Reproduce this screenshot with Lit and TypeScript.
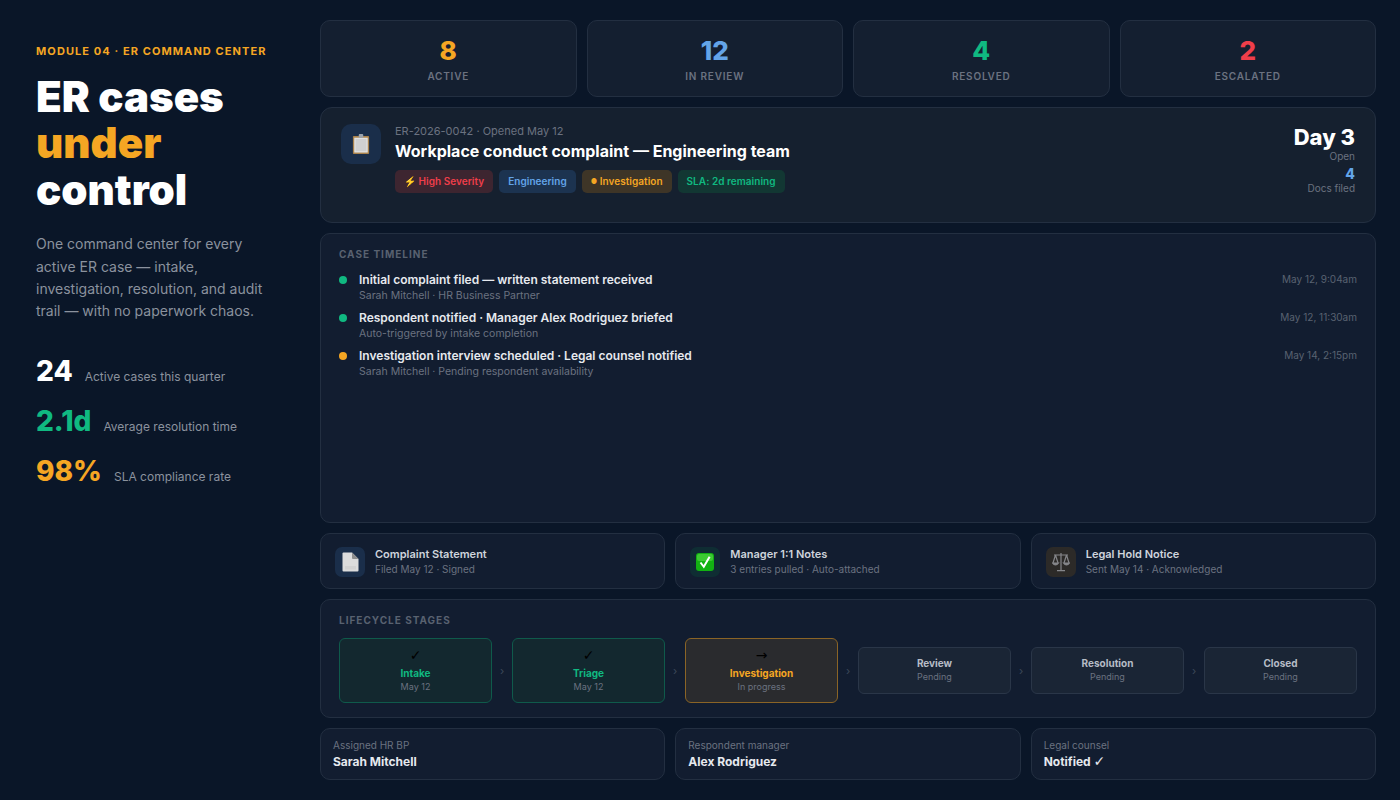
import { LitElement, html, css, svg } from 'lit';
import { customElement } from 'lit/decorators.js';

const stats = [
  { value: '8', label: 'ACTIVE', color: '#f5a623' },
  { value: '12', label: 'IN REVIEW', color: '#63a4e8' },
  { value: '4', label: 'RESOLVED', color: '#10b981' },
  { value: '2', label: 'ESCALATED', color: '#ef3e4a' },
];

const events = [
  { title: 'Initial complaint filed — written statement received', sub: 'Sarah Mitchell · HR Business Partner', time: 'May 12, 9:04am', color: '#10b981' },
  { title: 'Respondent notified · Manager Alex Rodriguez briefed', sub: 'Auto-triggered by intake completion', time: 'May 12, 11:30am', color: '#10b981' },
  { title: 'Investigation interview scheduled · Legal counsel notified', sub: 'Sarah Mitchell · Pending respondent availability', time: 'May 14, 2:15pm', color: '#f5a623' },
];

const clipboardIcon = svg`<svg width="18" height="20" viewBox="0 0 20 22">
  <rect x="1" y="2" width="18" height="20" rx="1" fill="#a9824c"/>
  <rect x="2.5" y="4" width="15" height="16.5" fill="#e2e2e2"/>
  <rect x="4" y="5.5" width="12" height="13.5" fill="#d0d0d0"/>
  <rect x="7.5" y="0" width="5" height="4" rx="1" fill="#9aa3ad"/>
</svg>`;

const pageIcon = svg`<svg width="17" height="20" viewBox="0 0 17 20">
  <path d="M0.5 1.5 Q0.5 0.5 1.5 0.5 H10 L16.5 7 V18.5 Q16.5 19.5 15.5 19.5 H1.5 Q0.5 19.5 0.5 18.5 Z" fill="#dcdcdc"/>
  <path d="M10 0.5 L16.5 7 H11 Q10 7 10 6 Z" fill="#8d8d8d"/>
  <path d="M3 14 H14 V17.5 H3 Z" fill="#d2d2d2"/>
</svg>`;

const checkIcon = svg`<svg width="18" height="18" viewBox="0 0 18 18">
  <rect width="18" height="18" rx="3" fill="#12b312"/>
  <rect x="1" y="1" width="16" height="7" rx="2" fill="#3ccb32"/>
  <path d="M4.5 9.5 L7.8 13.8 L13.6 3.8" fill="none" stroke="#fff" stroke-width="2"/>
</svg>`;

const scaleIcon = svg`<svg width="18" height="20" viewBox="0 0 18 20" fill="none" stroke="#85868a" stroke-width="1.2">
  <path d="M9 1 V18 M5 18.6 H13 M2 3 H16"/>
  <path d="M3.5 3 L1 11 M3.5 3 L6 11 M14.5 3 L12 11 M14.5 3 L17 11"/>
  <path d="M0.5 11 Q3.5 15 6.5 11 Z M11.5 11 Q14.5 15 17.5 11 Z" fill="#85868a"/>
</svg>`;

const docs = [
  { icon: pageIcon, tone: 'blue', title: 'Complaint Statement', sub: 'Filed May 12 · Signed' },
  { icon: checkIcon, tone: 'green', title: 'Manager 1:1 Notes', sub: '3 entries pulled · Auto-attached' },
  { icon: scaleIcon, tone: 'amber', title: 'Legal Hold Notice', sub: 'Sent May 14 · Acknowledged' },
];

const stages = [
  { mark: '✓', name: 'Intake', sub: 'May 12', state: 'done' },
  { mark: '✓', name: 'Triage', sub: 'May 12', state: 'done' },
  { mark: '→', name: 'Investigation', sub: 'In progress', state: 'current' },
  { mark: '', name: 'Review', sub: 'Pending', state: 'pending' },
  { mark: '', name: 'Resolution', sub: 'Pending', state: 'pending' },
  { mark: '', name: 'Closed', sub: 'Pending', state: 'pending' },
];

const people = [
  { label: 'Assigned HR BP', name: 'Sarah Mitchell', tick: false },
  { label: 'Respondent manager', name: 'Alex Rodriguez', tick: false },
  { label: 'Legal counsel', name: 'Notified', tick: true },
];

@customElement('app-root')
export class AppRoot extends LitElement {
  static styles = css`
    :host {
      display: flex;
      width: 1400px;
      height: 800px;
      overflow: hidden;
      background: #0a1628;
      font-family: Inter, 'Noto Sans', sans-serif;
      color: #fff;
    }

    /* left column */
    .side {
      box-sizing: border-box;
      width: 300px;
      flex: none;
      padding: 44px 30px 0 36px;
    }
    .eyebrow {
      font-size: 11px;
      line-height: 14px;
      font-weight: 700;
      letter-spacing: 1.08px;
      color: #f5a623;
      white-space: nowrap;
    }
    h1 {
      margin: 16px 0 20px;
      font-size: 42px;
      line-height: 46.4px;
      font-weight: 900;
      letter-spacing: 0;
    }
    h1 span { color: #f5a623; display: block; }
    .lede {
      margin: 0 0 31px;
      font-size: 14px;
      line-height: 22.4px;
      color: #8b929e;
    }
    .metric {
      display: flex;
      align-items: baseline;
      gap: 12px;
      height: 50px;
    }
    .metric b { font-size: 28px; line-height: 34px; font-weight: 800; }
    .metric span { font-size: 12px; color: #8b929e; }

    /* right column */
    .main {
      flex: 1;
      min-width: 0;
      display: flex;
      flex-direction: column;
      gap: 10px;
      padding: 20px 24px 20px 20px;
    }
    .card {
      box-sizing: border-box;
      border: 1px solid #232f41;
      border-radius: 10px;
      background: #121d30;
    }
    .stats { display: grid; grid-template-columns: repeat(4, 1fr); gap: 10px; }
    .stat {
      height: 77px;
      background: #141f30;
      text-align: center;
      padding-top: 15px;
    }
    .stat b { display: block; font-size: 26px; line-height: 30px; font-weight: 800; }
    .stat span {
      display: block;
      margin-top: 3px;
      font-size: 10px;
      line-height: 14px;
      font-weight: 600;
      letter-spacing: 0.8px;
      color: #6b7280;
    }

    .case {
      height: 116px;
      display: flex;
      gap: 14px;
      padding: 16px 20px;
      background: #15202f;
      border-radius: 12px;
    }
    .case-icon {
      width: 40px;
      height: 40px;
      flex: none;
      display: grid;
      place-items: center;
      border-radius: 10px;
      background: #1a2e4a;
    }
    .case-body { flex: 1; }
    .case-id { font-size: 11px; line-height: 14px; color: #6b7280; }
    .case-title { margin-top: 3px; font-size: 16px; line-height: 20px; font-weight: 700; }
    .tags { display: flex; gap: 6px; margin-top: 9px; }
    .tag {
      padding: 0 9px;
      height: 23px;
      line-height: 23px;
      border-radius: 5px;
      font-size: 10px;
      font-weight: 600;
      letter-spacing: 0.04px;
    }
    .tag.red { background: #3d2530; color: #ef3e4a; }
    .tag.blue { background: #1c3350; color: #63a4e8; }
    .tag.amber { background: #3e3527; color: #f5a623; }
    .tag.green { background: #123733; color: #10b981; }
    .bullet { font-size: 7px; vertical-align: 1px; }
    .case-side { text-align: right; }
    .day { font-size: 22px; line-height: 26px; font-weight: 800; }
    .case-side small { display: block; font-size: 10px; line-height: 12px; color: #6b7280; }
    .docs-count { margin-top: 4px; font-size: 14px; line-height: 16px; font-weight: 800; color: #63a4e8; }

    .section-title {
      font-size: 10px;
      line-height: 12px;
      font-weight: 700;
      letter-spacing: 1px;
      color: #596270;
    }
    .timeline { flex: 1; min-height: 0; padding: 14px 18px; }
    .events { display: flex; flex-direction: column; gap: 7px; margin-top: 12px; }
    .event { display: flex; gap: 12px; }
    .dot { width: 8px; height: 8px; flex: none; border-radius: 50%; margin-top: 4px; }
    .event-body { flex: 1; }
    .event-title { font-size: 12px; line-height: 15px; font-weight: 600; color: #e6e9ee; }
    .event-sub { margin-top: 2px; font-size: 10.5px; line-height: 14px; color: #6b7280; }
    .event-time { font-size: 10px; line-height: 14px; color: #596270; }

    .docs { display: grid; grid-template-columns: repeat(3, 1fr); gap: 10px; }
    .doc {
      height: 56px;
      display: flex;
      align-items: center;
      gap: 10px;
      padding: 2px 14px 0;
    }
    .doc-icon {
      width: 30px;
      height: 30px;
      flex: none;
      display: grid;
      place-items: center;
      border-radius: 7px;
    }
    .doc-icon.blue { background: #1a2e4a; }
    .doc-icon.green { background: #0f2d33; }
    .doc-icon.amber { background: #2c2a28; }
    .doc-title { font-size: 11px; line-height: 15px; font-weight: 600; color: #cfd4dc; }
    .doc-sub { font-size: 10px; line-height: 15px; color: #6b7280; }

    .life { height: 119px; padding: 14px 18px; }
    .stages { display: flex; align-items: center; margin-top: 12px; }
    .stage {
      box-sizing: border-box;
      flex: 1;
      height: 47px;
      display: flex;
      flex-direction: column;
      align-items: center;
      justify-content: center;
      border: 1px solid #2a3648;
      border-radius: 6px;
      background: #1a2535;
    }
    .stage.done, .stage.current { height: 65px; }
    .stage.done { background: #13282f; border-color: #0f5a4b; }
    .stage.current { background: #2a2b2e; border-color: #8a6426; }
    .stage i {
      font-family: 'DejaVu Sans', sans-serif;
      font-style: normal;
      font-size: 14px;
      line-height: 15px;
      color: #000;
      margin-bottom: 4px;
    }
    .stage b { font-size: 10px; line-height: 13px; font-weight: 700; color: #b6bcc6; }
    .stage.done b { color: #10b981; }
    .stage.current b { color: #f5a623; }
    .stage small { font-size: 9px; line-height: 14px; color: #6b7280; }
    .chev { width: 20px; flex: none; text-align: center; font-size: 11px; color: #3d4859; }

    .people { display: grid; grid-template-columns: repeat(3, 1fr); gap: 10px; }
    .person { height: 52px; padding: 9px 12px; }
    .person small { display: block; font-size: 10px; line-height: 14px; color: #6b7280; }
    .person b { display: block; margin-top: 1px; font-size: 12px; line-height: 17px; font-weight: 700; color: #e6e9ee; }
    .tick { font-family: 'DejaVu Sans', sans-serif; font-size: 14px; line-height: 14px; }
  `;

  render() {
    return html`
      <aside class="side">
        <div class="eyebrow">MODULE 04 · ER COMMAND CENTER</div>
        <h1>ER cases <span>under</span> control</h1>
        <p class="lede">One command center for every active ER case — intake, investigation, resolution, and audit trail — with no paperwork chaos.</p>
        <div class="metric"><b>24</b><span>Active cases this quarter</span></div>
        <div class="metric"><b style="color:#10b981">2.1d</b><span>Average resolution time</span></div>
        <div class="metric"><b style="color:#f5a623">98%</b><span>SLA compliance rate</span></div>
      </aside>
      <main class="main">
        <div class="stats">
          ${stats.map(s => html`
            <div class="card stat">
              <b style="color:${s.color}">${s.value}</b>
              <span>${s.label}</span>
            </div>`)}
        </div>
        <section class="card case">
          <div class="case-icon">${clipboardIcon}</div>
          <div class="case-body">
            <div class="case-id">ER-2026-0042 · Opened May 12</div>
            <div class="case-title">Workplace conduct complaint — Engineering team</div>
            <div class="tags">
              <span class="tag red">⚡ High Severity</span>
              <span class="tag blue">Engineering</span>
              <span class="tag amber"><span class="bullet">●</span> Investigation</span>
              <span class="tag green">SLA: 2d remaining</span>
            </div>
          </div>
          <div class="case-side">
            <div class="day">Day 3</div>
            <small>Open</small>
            <div class="docs-count">4</div>
            <small>Docs filed</small>
          </div>
        </section>
        <section class="card timeline">
          <div class="section-title">CASE TIMELINE</div>
          <div class="events">
            ${events.map(e => html`
              <div class="event">
                <span class="dot" style="background:${e.color}"></span>
                <div class="event-body">
                  <div class="event-title">${e.title}</div>
                  <div class="event-sub">${e.sub}</div>
                </div>
                <div class="event-time">${e.time}</div>
              </div>`)}
          </div>
        </section>
        <div class="docs">
          ${docs.map(d => html`
            <div class="card doc">
              <div class="doc-icon ${d.tone}">${d.icon}</div>
              <div>
                <div class="doc-title">${d.title}</div>
                <div class="doc-sub">${d.sub}</div>
              </div>
            </div>`)}
        </div>
        <section class="card life">
          <div class="section-title">LIFECYCLE STAGES</div>
          <div class="stages">
            ${stages.map((s, i) => html`
              ${i > 0 ? html`<span class="chev">›</span>` : ''}
              <div class="stage ${s.state}">
                ${s.mark ? html`<i>${s.mark}</i>` : ''}
                <b>${s.name}</b>
                <small>${s.sub}</small>
              </div>`)}
          </div>
        </section>
        <div class="people">
          ${people.map(p => html`
            <div class="card person">
              <small>${p.label}</small>
              <b>${p.name}${p.tick ? html` <span class="tick">✓</span>` : ''}</b>
            </div>`)}
        </div>
      </main>
    `;
  }
}
